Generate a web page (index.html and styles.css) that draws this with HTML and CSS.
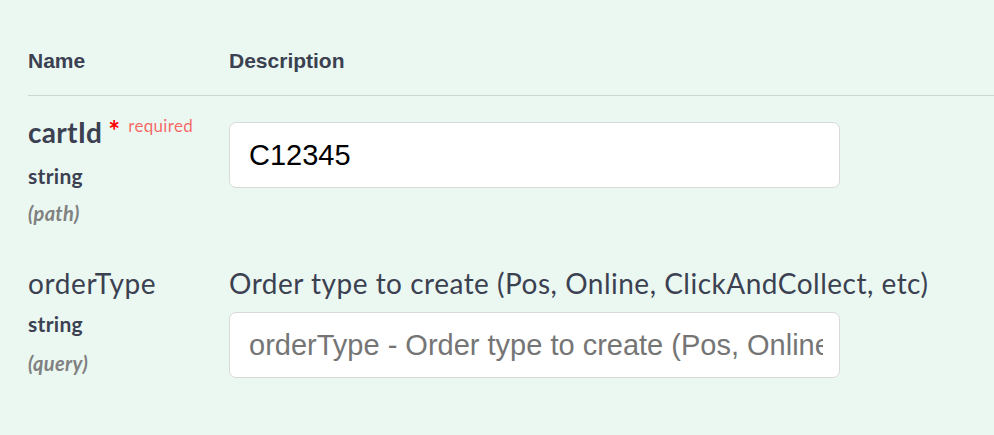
FILE: index.html
```html
<!DOCTYPE html>
<html lang="en">
<head>
  <meta charset="UTF-8" />
  <title>Parameters</title>
  <link rel="stylesheet" href="styles.css">
</head>
<body>
  <div class="parameters">
    <div class="param-row head">
      <div class="col-name">Name</div>
      <div class="col-desc">Description</div>
    </div>

    <div class="param-row">
      <div class="col-name">
        <div class="param-name required">cartId<span class="star">*</span><span class="req">required</span></div>
        <div class="param-type">string</div>
        <div class="param-in">(path)</div>
      </div>
      <div class="col-desc">
        <input type="text" class="param-input first" value="C12345">
      </div>
    </div>

    <div class="param-row">
      <div class="col-name">
        <div class="param-name">orderType</div>
        <div class="param-type">string</div>
        <div class="param-in">(query)</div>
      </div>
      <div class="col-desc">
        <p class="markdown">Order type to create (Pos, Online, ClickAndCollect, etc)</p>
        <input type="text" class="param-input" placeholder="orderType - Order type to create (Pos, Online, ClickAndCollect, etc)">
      </div>
    </div>
  </div>
</body>
</html>
```

FILE: styles.css
```css
:root {
  --text-color: #3b4151;
  --bg-color: #ebf8f2;
  --line-color: #c9d6d1;
}

* {
  box-sizing: border-box;
  margin: 0;
  padding: 0;
}

body {
  background: var(--bg-color);
  color: var(--text-color);
  font-family: 'Lato', sans-serif;
  overflow: hidden;
}

.parameters {
  padding: 48px 0 0 28px;
}

.param-row {
  display: grid;
  grid-template-columns: 201px 1fr;
}

.param-row.head {
  font-family: 'Liberation Sans', Arial, sans-serif;
  font-size: 21px;
  font-weight: 700;
  line-height: 25px;
  padding-bottom: 22px;
  border-bottom: 1px solid var(--line-color);
}

.param-name {
  font-size: 28px;
  line-height: 32px;
  letter-spacing: 0.6px;
}

.param-name.required {
  font-weight: 700;
  letter-spacing: 0.3px;
}

.star {
  color: #ff0000;
  font-size: 28px;
  position: relative;
  top: -2px;
  margin-left: 6px;
}

.req {
  color: rgba(255, 0, 0, 0.6);
  font-size: 17px;
  font-weight: 400;
  letter-spacing: 0.3px;
  position: relative;
  top: -11px;
  margin-left: 8px;
}

.param-type {
  font-size: 21px;
  font-weight: 700;
  line-height: 24px;
  letter-spacing: 0.3px;
  margin-top: 11px;
}

.param-in {
  font-size: 20px;
  font-style: italic;
  font-weight: 700;
  color: #808080;
  line-height: 24px;
  letter-spacing: 0.3px;
  margin-top: 13px;
}

.param-row + .param-row {
  padding-top: 20px;
}

.param-row + .param-row + .param-row {
  padding-top: 42px;
}

.param-row + .param-row + .param-row .param-type {
  margin-top: 13px;
}

.param-row + .param-row + .param-row .param-in {
  margin-top: 15px;
}

.markdown {
  font-size: 28px;
  line-height: 32px;
  letter-spacing: 0.5px;
  margin-bottom: 13px;
}

.param-input {
  display: block;
  width: 611px;
  height: 66px;
  padding: 0 16px 0 19px;
  background: #fff;
  border: 1px solid #d9d9d9;
  border-radius: 7px;
  font-family: 'Liberation Sans', Arial, sans-serif;
  font-size: 29px;
  color: #000;
  outline: none;
}

.param-input.first {
  margin-top: 6px;
}

.param-input::placeholder {
  color: #757575;
}
```
